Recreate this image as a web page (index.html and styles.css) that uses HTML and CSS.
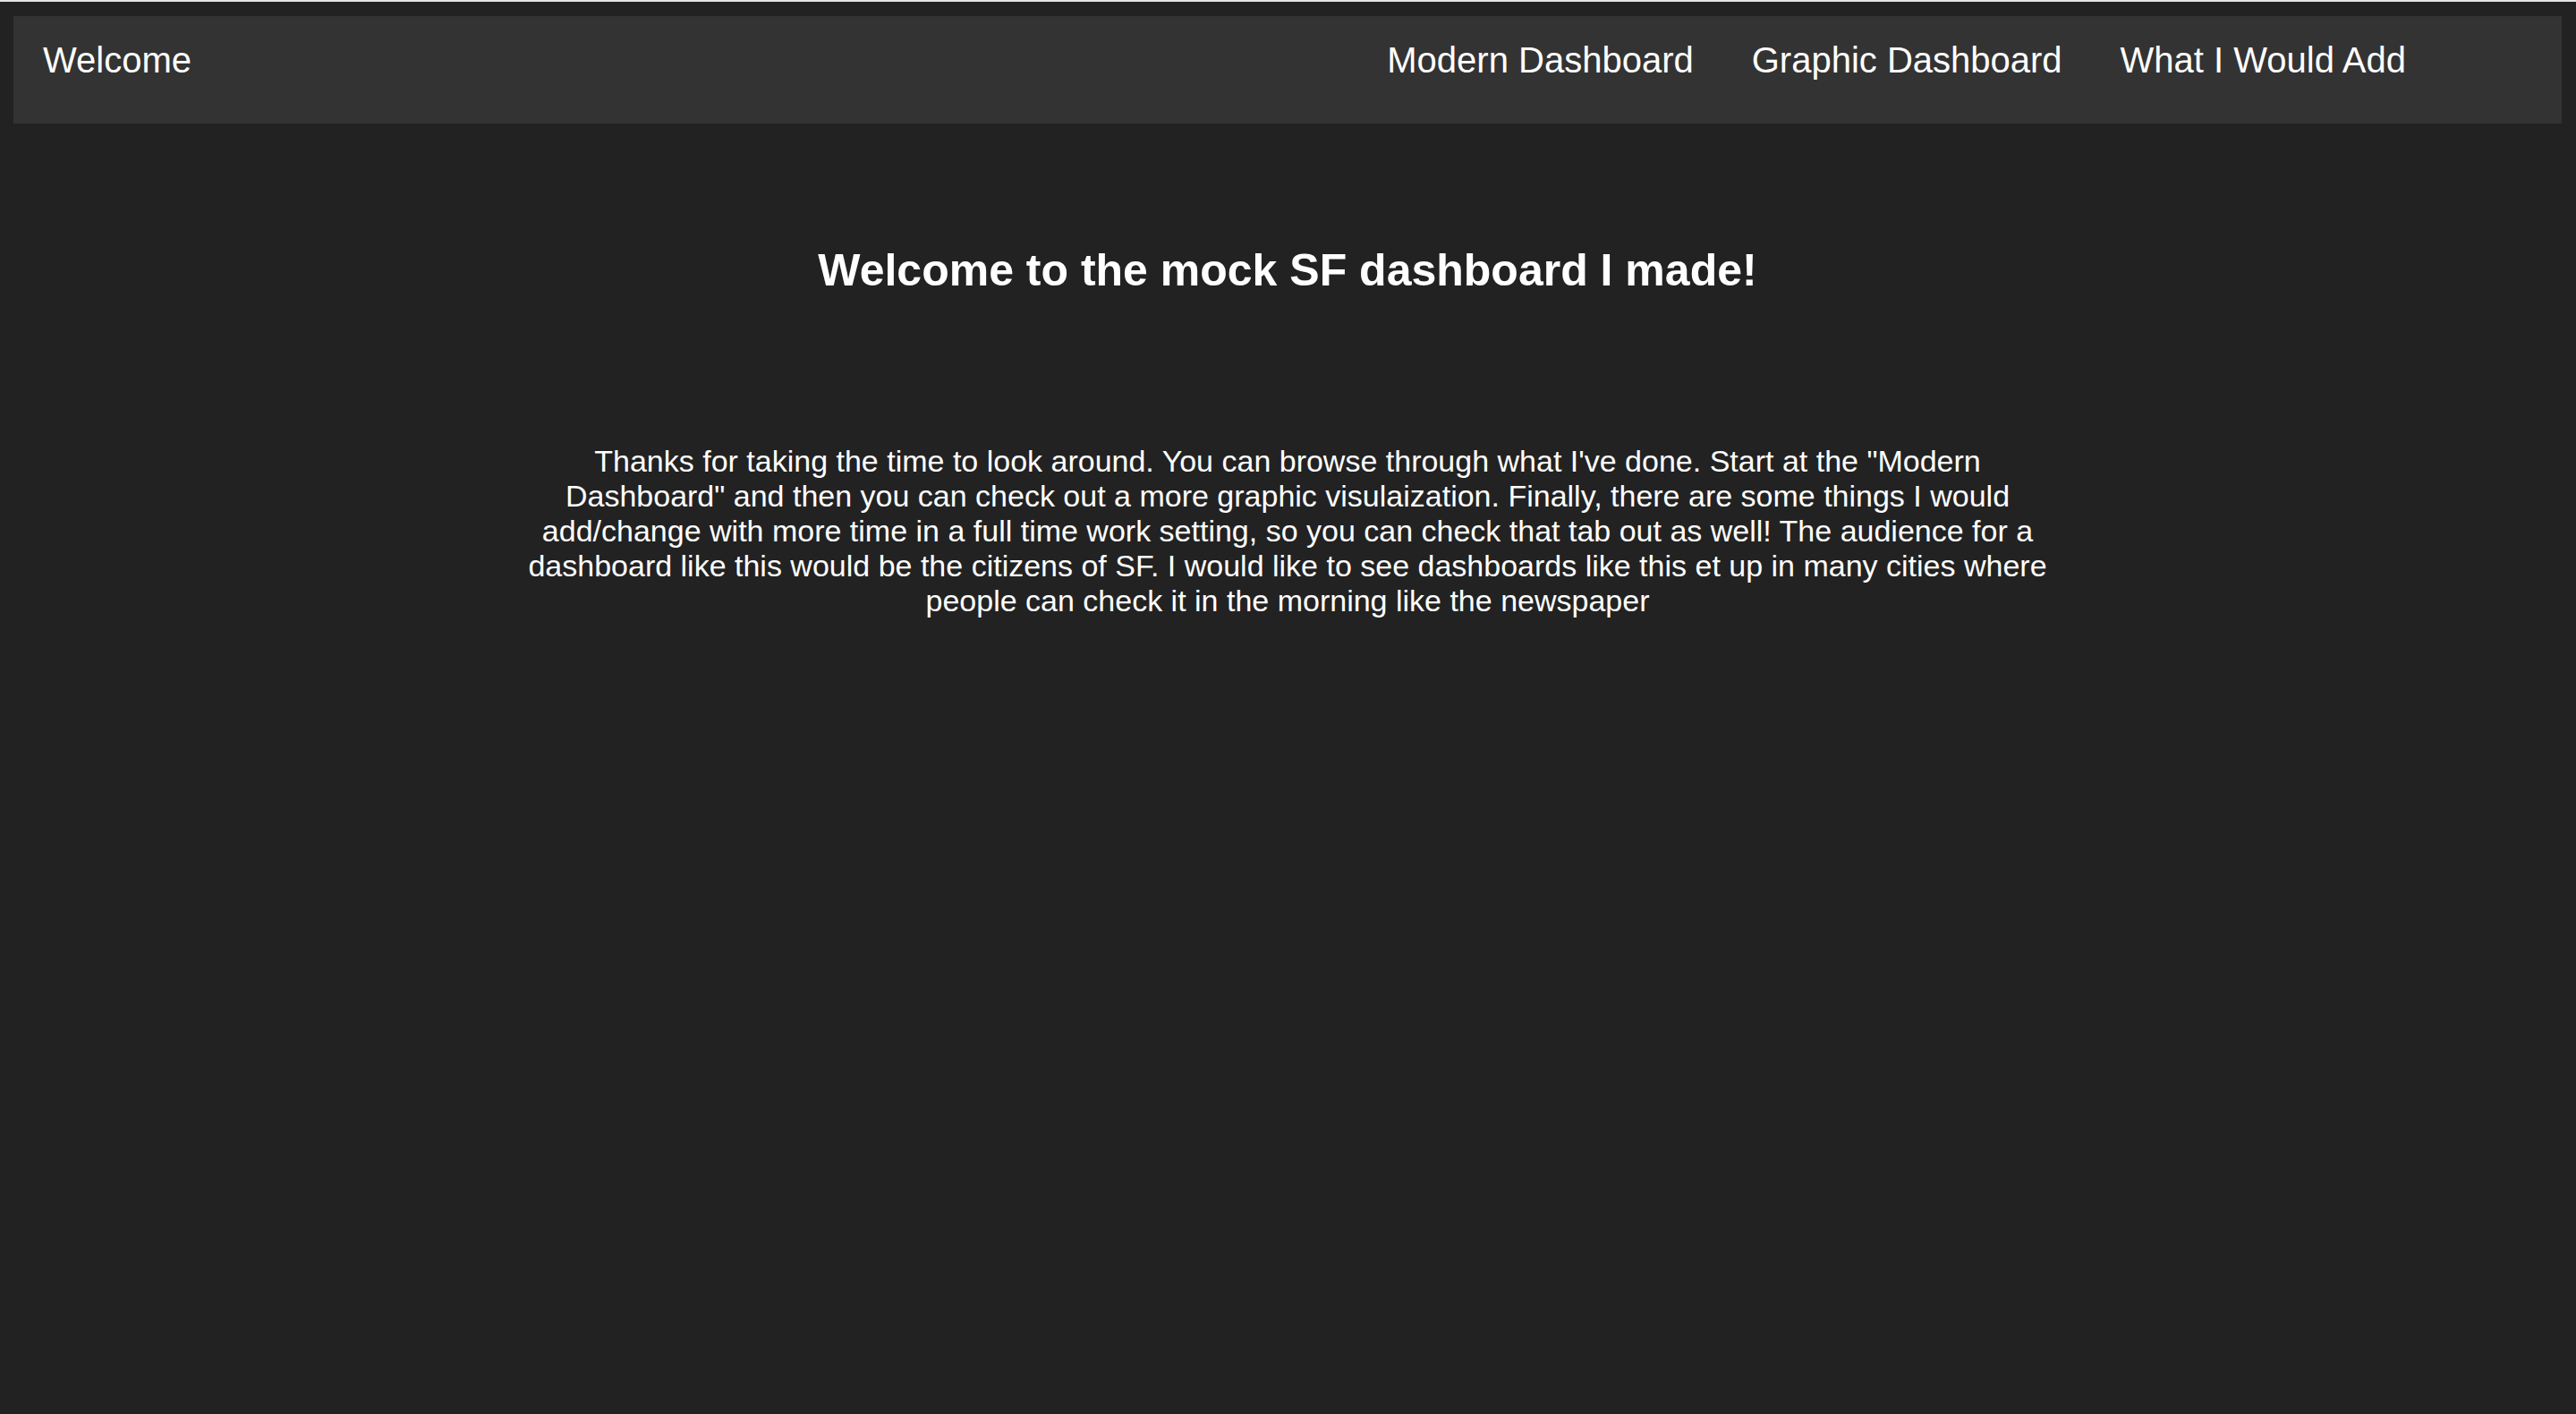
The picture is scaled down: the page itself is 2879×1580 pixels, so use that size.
FILE: index.html
```html
<!DOCTYPE html>
<html lang="en">
<head>
<meta charset="utf-8">
<title>SF Dashboard</title>
<link rel="stylesheet" href="styles.css">
</head>
<body>
  <nav class="topnav">
    <ul class="nav-left">
      <li><a class="nav-link" href="#">Welcome</a></li>
    </ul>
    <ul class="nav-right">
      <li><a class="nav-link" href="#">Modern Dashboard</a></li>
      <li><a class="nav-link" href="#">Graphic Dashboard</a></li>
      <li><a class="nav-link" href="#">What I Would Add</a></li>
    </ul>
  </nav>
  <main class="content">
    <h1 class="title">Welcome to the mock SF dashboard I made!</h1>
    <p class="intro">Thanks for taking the time to look around. You can browse through what I've done. Start at the "Modern Dashboard" and then you can check out a more graphic visulaization. Finally, there are some things I would add/change with more time in a full time work setting, so you can check that tab out as well! The audience for a dashboard like this would be the citizens of SF. I would like to see dashboards like this et up in many cities where people can check it in the morning like the newspaper</p>
  </main>
</body>
</html>
```
FILE: styles.css
```css
html {
  background: #222222;
  border-top: 2px solid #e4e4e4;
}
body {
  margin: 16px 16px 0 15px;
  font-family: "Liberation Sans", Arial, Helvetica, sans-serif;
  color: #ffffff;
  min-height: 1540px;
}
.topnav {
  display: flex;
  align-items: flex-start;
  height: 120px;
  background: #333333;
}
.nav-left,
.nav-right {
  list-style: none;
  margin: 0;
  padding: 0;
  display: flex;
}
.nav-right {
  margin-left: auto;
  padding-right: 142px;
}
.nav-link {
  display: block;
  padding: 27px 32px 0 33px;
  font-size: 40px;
  color: #ffffff;
  text-decoration: none;
}
.content {
  display: flex;
  flex-direction: column;
  align-items: center;
}
.title {
  margin: 135px 0 0 0;
  font-size: 50px;
  font-weight: bold;
  text-align: center;
}
.intro {
  width: 1716px;
  margin: 165px 0 0 0;
  font-size: 34px;
  text-align: center;
}
```
